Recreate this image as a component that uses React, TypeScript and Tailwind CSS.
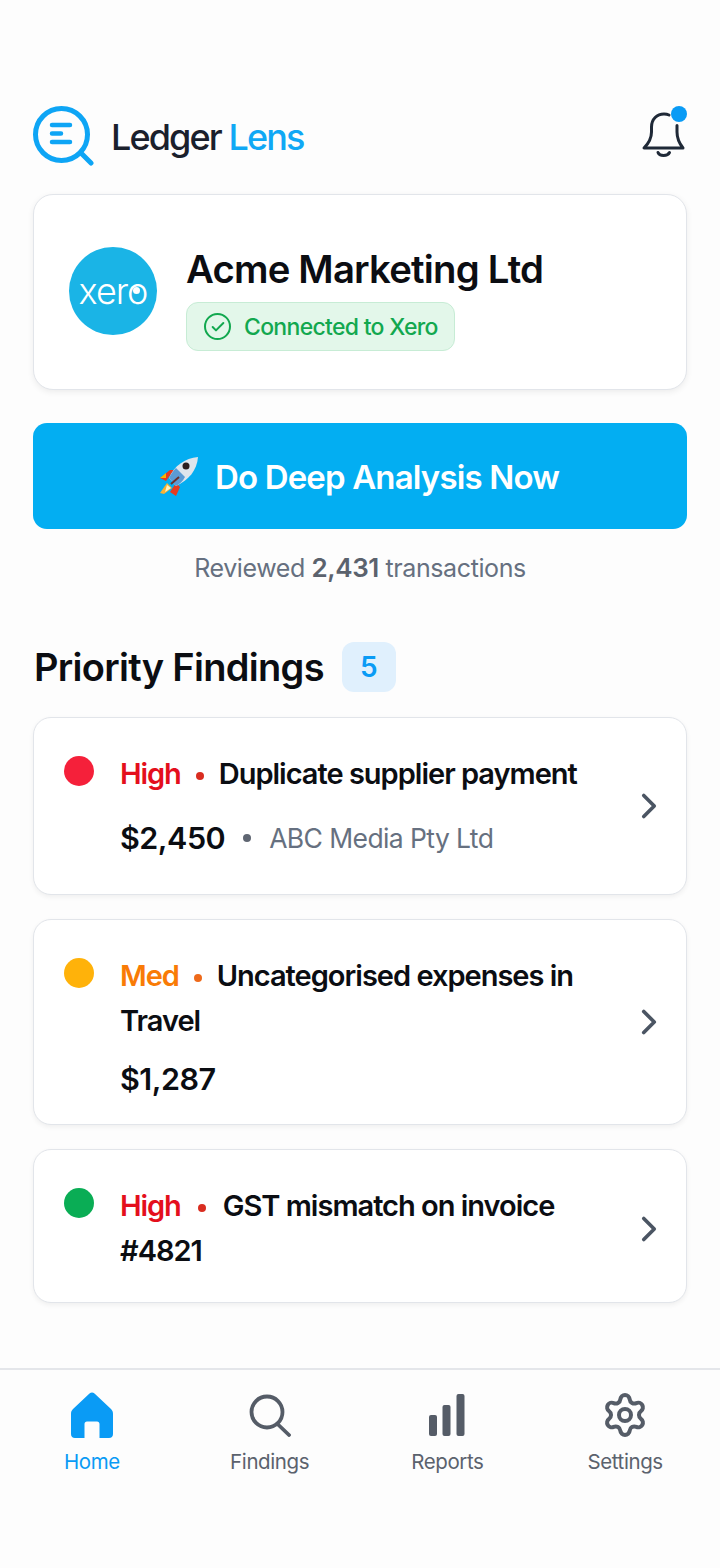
import { Check, ChevronRight, Settings } from "lucide-react";

const font = { fontFamily: "Inter, 'Liberation Sans', sans-serif" };

function Logo() {
  return (
    <svg width="62" height="62" viewBox="0 0 62 62" fill="none">
      <circle cx="28.5" cy="30.5" r="26" stroke="#0ea5f5" strokeWidth="5" />
      <path d="M49 50L58 59" stroke="#0ea5f5" strokeWidth="5" strokeLinecap="round" />
      <path d="M19 21H37M19 29.5H28M19 38H37" stroke="#0ea5f5" strokeWidth="4.5" strokeLinecap="round" />
    </svg>
  );
}

function Bell() {
  return (
    <svg width="46" height="50" viewBox="0 0 46 50" fill="none" stroke="#1f2937" strokeWidth="3" strokeLinecap="round" strokeLinejoin="round">
      <path d="M29 5C27.5 4.3 26 4 24 4C17 4 11.5 9 11.5 17V22C11.5 29 9 33 4 38H43C39 33 37 29 37 22V15.5" />
      <path d="M18 42.5C19.5 46.5 27.5 46.5 29.5 42.5" />
    </svg>
  );
}

function Rocket() {
  return (
    <svg width="42" height="40" viewBox="0 0 42 40">
      <path d="M9 25L3 22L13 14L17 14Z" fill="#e63b1f" />
      <path d="M3 22L9 17L9 22Z" fill="#f7b500" />
      <path d="M19 27L23 31L19 40L13 36Z" fill="#e63b1f" />
      <path d="M10 27L15 32L7 38L3 37Z" fill="#f9b233" />
      <path d="M10 29L14 32L8 36Z" fill="#fff3c4" />
      <path d="M12 22C17 10 28 2 41 1C40 14 32 24 19 30Z" fill="#dfe5ec" />
      <path d="M12 22C14 18 16 15 19 12L28 21C26 25 23 28 19 30Z" fill="#5b9bd5" />
      <circle cx="29" cy="10" r="3.5" fill="#2b1d1d" />
      <path d="M14 28L22 21" stroke="#6b2f2a" strokeWidth="2" />
    </svg>
  );
}

function Finding({ height, color, level, levelColor, dotColor, dotGap, title, amount, amountGap, vendor, chevron }: { height: string; color: string; level: string; levelColor: string; dotColor: string; dotGap: string; title: string; amount?: string; amountGap?: string; vendor?: string; chevron?: string }) {
  return (
    <div className={`flex items-center justify-between rounded-[18px] border border-[#e2e5ea] bg-white pr-[16px] pl-[30px] shadow-[0_2px_5px_rgba(0,0,0,0.06)] ${height}`}>
      <div className="flex gap-[26px] self-start pt-[33px]">
        <span className={`mt-[5px] h-[30px] w-[30px] shrink-0 rounded-full ${color}`} />
        <div className="min-w-0">
          <p className="w-[465px] text-[29px] leading-[45px] font-semibold tracking-[-1px] text-[#0b0d12]">
            <span className={`font-semibold tracking-[-1.1px] ${levelColor}`}>{level}</span>
            <span className={`inline-block h-[8px] w-[8px] rounded-full align-middle ${dotColor} ${dotGap}`} />
            <span>{title}</span>
          </p>
          {amount && (
            <div className={`flex items-center ${amountGap}`}>
              <span className="text-[30.5px] leading-[40px] font-semibold tracking-[-0.5px] text-[#0b0d12]">{amount}</span>
              {vendor && (
                <>
                  <span className="mx-[18px] h-[8px] w-[8px] rounded-full bg-[#5f6672]" />
                  <span className="text-[26.5px] leading-[40px] tracking-[-0.6px] text-[#667080]">{vendor}</span>
                </>
              )}
            </div>
          )}
        </div>
      </div>
      <ChevronRight size={42} strokeWidth={2.1} color="#4b5563" className={`shrink-0 ${chevron ?? ""}`} />
    </div>
  );
}

function NavItem({ icon, label, active }: { icon: React.ReactNode; label: string; active?: boolean }) {
  return (
    <div className="flex w-[177.75px] flex-col items-center">
      <div className="flex h-[50px] items-center justify-center">{icon}</div>
      <span className={`mt-[7px] text-[20.5px] leading-[30px] tracking-[-0.4px] ${active ? "text-[#0a9bf5]" : "text-[#5b626d]"}`}>{label}</span>
    </div>
  );
}

export default function App() {
  return (
    <div style={font} className="flex min-h-[1568px] w-[720px] flex-col bg-[#fdfdfd]">
      <div className="flex flex-col px-[33px] pt-[104px]">
        <header className="flex h-[62px] items-center justify-between">
          <div className="flex items-center gap-[16px]">
            <Logo />
            <span className="mt-[4px] text-[36px] font-medium tracking-[-1.9px] text-[#1a202c]">
              Ledger <span className="text-[#10a8f5]">Lens</span>
            </span>
          </div>
          <div className="relative mr-[1px]">
            <Bell />
            <span className="absolute top-[-4px] left-[31px] h-[16px] w-[16px] rounded-full bg-[#0a9bf5]" />
          </div>
        </header>

        <section className="mt-[28px] flex h-[196px] items-start gap-[29px] rounded-[20px] border border-[#e2e5ea] bg-white pt-[52px] pl-[35px] shadow-[0_2px_6px_rgba(0,0,0,0.07)]">
          <div className="relative flex h-[88px] w-[88px] items-center justify-center rounded-full bg-[#1ab4e6]">
            <span className="text-[36px] leading-none font-light tracking-[-1px] text-white">xero</span>
            <span className="absolute top-[40px] left-[64px] h-[7px] w-[7px] rounded-full bg-white" />
          </div>
          <div>
            <h1 className="text-[38.3px] leading-[44px] font-semibold tracking-[-0.8px] text-[#0b0d12]">Acme Marketing Ltd</h1>
            <div className="mt-[11px] flex h-[49px] w-[269px] items-center gap-[13px] rounded-[12px] border border-[#c7ecd5] bg-[#e3f7ea] pl-[17px]">
              <span className="flex h-[27px] w-[27px] items-center justify-center rounded-full border-[2.5px] border-[#12a84f]">
                <Check size={16} strokeWidth={3} color="#12a84f" />
              </span>
              <span className="mt-[1px] text-[23px] font-medium tracking-[-0.7px] text-[#12a84f]">Connected to Xero</span>
            </div>
          </div>
        </section>

        <button className="mt-[33px] flex h-[106px] items-center justify-center gap-[16px] rounded-[14px] bg-[#03aef2] pr-[4px] text-[33px] font-semibold tracking-[-0.85px] text-white">
          <Rocket />
          <span className="mt-[4px]">Do Deep Analysis Now</span>
        </button>

        <p className="mt-[23px] text-center text-[25px] leading-[32px] tracking-[-0.4px] text-[#667080]">
          Reviewed <span className="text-[26px] font-semibold text-[#5b626d]">2,431</span> transactions
        </p>

        <div className="mt-[58px] flex h-[50px] items-center gap-[18px] pl-[1px]">
          <h2 className="text-[38px] font-semibold tracking-[-0.7px] text-[#0b0d12]">Priority Findings</h2>
          <span className="flex h-[50px] w-[54px] items-center justify-center rounded-[12px] bg-[#e0f0fd] text-[28px] font-semibold text-[#0a9bf5]">5</span>
        </div>

        <div className="mt-[25px] flex flex-col gap-[24px]">
          <Finding height="h-[178px]" color="bg-[#f5203a]" level="High" levelColor="text-[#e40f1c]" dotColor="bg-[#d92d20]" dotGap="mx-[15px]" title="Duplicate supplier payment" amount="$2,450" amountGap="mt-[22px]" vendor="ABC Media Pty Ltd" />
          <Finding height="h-[206px]" color="bg-[#ffb20a]" level="Med" levelColor="text-[#f97b06]" dotColor="bg-[#ee6a1a]" dotGap="mx-[15px]" title="Uncategorised expenses in Travel" amount="$1,287" amountGap="mt-[16px]" />
          <Finding height="h-[154px]" color="bg-[#0aad55]" level="High" levelColor="text-[#e40f1c]" dotColor="bg-[#d92d20]" dotGap="mx-[17px]" title="GST mismatch on invoice #4821" chevron="mt-[6px]" />
        </div>
      </div>

      <nav className="mt-[65px] flex h-[200px] border-t-2 border-[#e4e6ea] pt-[20px] pl-[3px]">
        <NavItem
          active
          label="Home"
          icon={
            <svg width="42" height="46" viewBox="0 0 42 46" fill="#0a9bf5">
              <path d="M18.5 1.5C20 0 22 0 23.5 1.5L40 17C41.5 18.5 42 20 42 22V42C42 44.5 40.5 46 38 46H28.5V32C28.5 30.5 27.5 29.5 26 29.5H16C14.5 29.5 13.5 30.5 13.5 32V46H4C1.5 46 0 44.5 0 42V22C0 20 0.5 18.5 2 17Z" />
            </svg>
          }
        />
        <NavItem
          label="Findings"
          icon={
            <svg width="42" height="44" viewBox="0 0 42 44" fill="none" stroke="#555c67" strokeWidth="3.8" strokeLinecap="round">
              <circle cx="18" cy="19" r="15.5" />
              <path d="M28.5 31L40 42" />
            </svg>
          }
        />
        <NavItem
          label="Reports"
          icon={
            <svg width="36" height="42" viewBox="0 0 36 42" fill="#555c67">
              <rect x="0" y="21" width="8" height="21" rx="2" />
              <rect x="13.5" y="11" width="8" height="31" rx="2" />
              <rect x="27.5" y="0" width="8" height="42" rx="2" />
            </svg>
          }
        />
        <NavItem label="Settings" icon={<Settings size={48} strokeWidth={2} color="#555c67" />} />
      </nav>
    </div>
  );
}
